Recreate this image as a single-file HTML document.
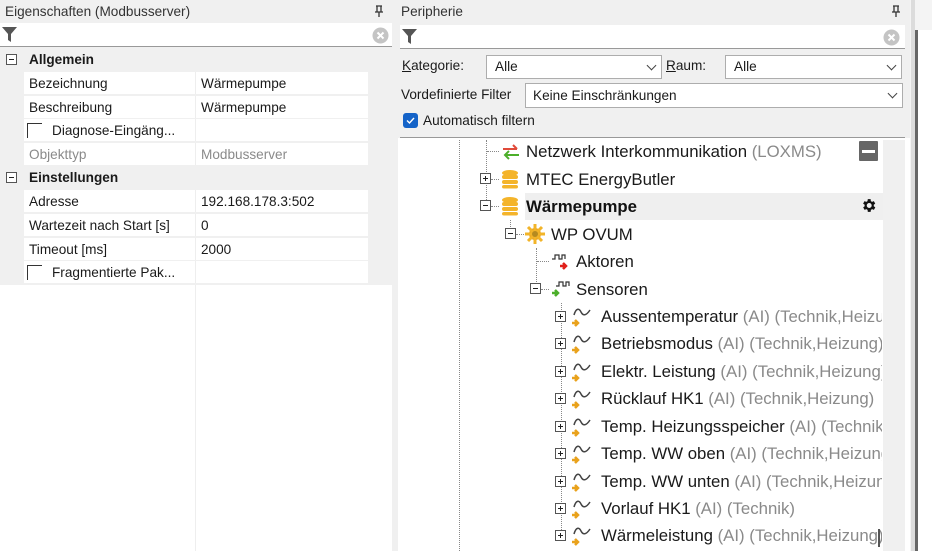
<!DOCTYPE html>
<html><head><meta charset="utf-8"><style>
*{margin:0;padding:0;box-sizing:border-box}
body{width:932px;height:551px;overflow:hidden;background:#fff;font-family:"Liberation Sans",sans-serif;position:relative;color:#1a1a1a}
.a{position:absolute;white-space:nowrap}
.t14{font-size:13.6px}
.t16{font-size:16.8px}
.g{color:#8a8a8a}
.box{position:absolute;width:11px;height:11px;border:1px solid #555;background:#fff}
.box:before{content:"";position:absolute;left:2px;top:4px;width:5px;height:1px;background:#222}
.plus:after{content:"";position:absolute;left:4px;top:2px;width:1px;height:5px;background:#222}
.vd{position:absolute;width:0;border-left:1px dotted #888}
.hd{position:absolute;height:0;border-top:1px dotted #888}
.row{position:absolute;left:24px;width:344px;height:22px;background:#fff}
.row .c{position:absolute;left:171px;top:0;width:1px;height:22px;background:#eee}
.cmb{position:absolute;background:#fff;border:1px solid #adadad;height:24px}
.chev{position:absolute;right:6px;top:6px;width:7px;height:7px;border-right:1.3px solid #444;border-bottom:1.3px solid #444;transform:rotate(45deg)}
.st{width:281px;overflow:hidden}
</style></head><body>
<!-- left panel -->
<div class="a" style="left:0;top:0;width:392px;height:285px;background:#f0f0f0"></div>
<div class="a t14" style="left:5px;top:4px;color:#333">Eigenschaften (Modbusserver)</div>
<svg class="a" style="left:374px;top:5px" width="10" height="12"><path d="M2 1H8M3 1V7M7 1V7M1 7H9M5 7V12" stroke="#333" stroke-width="1.3" fill="none"/></svg>
<div class="a" style="left:0;top:23px;width:392px;height:24px;background:#fff;border-bottom:1px solid #999"></div>
<svg class="a" style="left:1px;top:26px" width="17" height="17" viewBox="0 0 17 17"><path d="M1 1H16L10 8V16L7 14V8Z" fill="#555"/></svg>
<svg class="a" style="left:372px;top:27px" width="17" height="17" viewBox="0 0 17 17"><circle cx="8.5" cy="8.5" r="8" fill="#c4c4c4"/><path d="M5.5 5.5L11.5 11.5M11.5 5.5L5.5 11.5" stroke="#fff" stroke-width="2"/></svg>
<div class="box" style="left:6px;top:54px"></div>
<div class="a t14" style="left:29px;top:52px;font-weight:bold">Allgemein</div>
<div class="row" style="top:72px"><div class="c"></div><div class="a t14" style="left:5px;top:4px">Bezeichnung</div><div class="a t14" style="left:177px;top:4px">Wärmepumpe</div></div>
<div class="row" style="top:96px"><div class="c"></div><div class="a t14" style="left:5px;top:4px">Beschreibung</div><div class="a t14" style="left:177px;top:4px">Wärmepumpe</div></div>
<div class="row" style="top:119px"><div class="c"></div><div class="a" style="left:3px;top:4px;width:15px;height:15px;border-left:1px solid #333;border-top:1px solid #333"></div><div class="a t14" style="left:28px;top:4px">Diagnose-Eingäng...</div></div>
<div class="row" style="top:143px"><div class="c"></div><div class="a t14 g" style="left:5px;top:4px">Objekttyp</div><div class="a t14 g" style="left:177px;top:4px">Modbusserver</div></div>
<div class="box" style="left:6px;top:172px"></div>
<div class="a t14" style="left:29px;top:170px;font-weight:bold">Einstellungen</div>
<div class="row" style="top:190px"><div class="c"></div><div class="a t14" style="left:5px;top:4px">Adresse</div><div class="a t14" style="left:177px;top:4px">192.168.178.3:502</div></div>
<div class="row" style="top:214px"><div class="c"></div><div class="a t14" style="left:5px;top:4px">Wartezeit nach Start [s]</div><div class="a t14" style="left:177px;top:4px">0</div></div>
<div class="row" style="top:238px"><div class="c"></div><div class="a t14" style="left:5px;top:4px">Timeout [ms]</div><div class="a t14" style="left:177px;top:4px">2000</div></div>
<div class="row" style="top:261px"><div class="c"></div><div class="a" style="left:3px;top:4px;width:15px;height:15px;border-left:1px solid #333;border-top:1px solid #333"></div><div class="a t14" style="left:28px;top:4px">Fragmentierte Pak...</div></div>
<div class="a" style="left:195px;top:285px;width:1px;height:266px;background:#eee"></div>
<div class="a" style="left:392px;top:0;width:6px;height:551px;background:#f0f0f0"></div>

<!-- right panel -->
<div class="a" style="left:398px;top:0;width:512px;height:140px;background:#f0f0f0"></div>
<div class="a t14" style="left:401px;top:4px;color:#333">Peripherie</div>
<svg class="a" style="left:891px;top:5px" width="10" height="12"><path d="M2 1H8M3 1V7M7 1V7M1 7H9M5 7V12" stroke="#333" stroke-width="1.3" fill="none"/></svg>
<div class="a" style="left:400px;top:25px;width:505px;height:24px;background:#fff;border-bottom:1px solid #999"></div>
<svg class="a" style="left:401px;top:28px" width="17" height="17" viewBox="0 0 17 17"><path d="M1 1H16L10 8V16L7 14V8Z" fill="#555"/></svg>
<svg class="a" style="left:883px;top:29px" width="17" height="17" viewBox="0 0 17 17"><circle cx="8.5" cy="8.5" r="8" fill="#c4c4c4"/><path d="M5.5 5.5L11.5 11.5M11.5 5.5L5.5 11.5" stroke="#fff" stroke-width="2"/></svg>
<div class="a t14" style="left:402px;top:58px"><u>K</u>ategorie:</div>
<div class="cmb" style="left:486px;top:55px;width:176px"><div class="a t14" style="left:8px;top:3px">Alle</div><div class="chev"></div></div>
<div class="a t14" style="left:666px;top:58px"><u>R</u>aum:</div>
<div class="cmb" style="left:725px;top:55px;width:177px"><div class="a t14" style="left:8px;top:3px">Alle</div><div class="chev"></div></div>
<div class="a t14" style="left:401px;top:87px">Vordefinierte Filter</div>
<div class="cmb" style="left:525px;top:83px;width:378px;height:25px"><div class="a t14" style="left:7px;top:4px">Keine Einschränkungen</div><div class="chev"></div></div>
<div class="a" style="left:403px;top:113px;width:15px;height:15px;background:#1463c8;border-radius:3px"></div>
<svg class="a" style="left:403px;top:113px" width="15" height="15"><path d="M4 7.5L6.5 10L11 5" stroke="#fff" fill="none" stroke-width="1.4"/></svg>
<div class="a t14" style="left:423px;top:113px">Automatisch filtern</div>
<div class="a" style="left:400px;top:137px;width:505px;height:1px;background:#999"></div>
<div class="a" style="left:398px;top:138px;width:512px;height:413px;background:#fff"></div>
<div class="a" style="left:883px;top:140px;width:22px;height:411px;background:#f0f0f0"></div>
<div class="a" style="left:910px;top:0;width:22px;height:551px;background:#f4f4f4"></div>
<div class="a" style="left:911px;top:0;width:4px;height:551px;background:#dcdcdc"></div>
<div class="a" style="left:915px;top:30px;width:3px;height:521px;background:#666"></div>
<div class="a" style="left:918px;top:30px;width:14px;height:521px;background:#fff"></div>

<!-- tree -->
<div class="vd" style="left:459px;top:140px;height:411px"></div>
<div class="vd" style="left:486px;top:140px;height:66px"></div>
<div class="hd" style="left:487px;top:151px;width:12px"></div>
<div class="hd" style="left:491px;top:179px;width:8px"></div>
<div class="hd" style="left:491px;top:206px;width:8px"></div>
<svg class="a" style="left:501px;top:142px" width="20" height="20"><path d="M2 7H16M12 3L16 7" stroke="#e04a3a" stroke-width="2" fill="none"/><path d="M18 13H4M8 9L4 13L8 17" stroke="#4caf2a" stroke-width="2" fill="none"/></svg>
<div class="a t16" style="left:526px;top:142px">Netzwerk Interkommunikation <span class="g">(LOXMS)</span></div>
<div class="a" style="left:859px;top:141px;width:19px;height:20px;background:#666;border-radius:1px"></div>
<div class="a" style="left:862px;top:150px;width:13px;height:3px;background:#fff"></div>
<div class="box plus" style="left:480px;top:173px"></div>
<svg class="a" style="left:501px;top:169px" width="18" height="20"><ellipse cx="9" cy="4" rx="8" ry="3" fill="#f4b42a"/><rect x="1" y="6" width="16" height="4" rx="2" fill="#f4b42a"/><rect x="1" y="11" width="16" height="4" rx="2" fill="#f4b42a"/><rect x="1" y="16" width="16" height="3.5" rx="2" fill="#f4b42a"/></svg>
<div class="a t16" style="left:526px;top:170px">MTEC EnergyButler</div>
<div class="a" style="left:525px;top:193px;width:358px;height:27px;background:#efefef"></div>
<div class="box" style="left:480px;top:200px"></div>
<svg class="a" style="left:501px;top:196px" width="18" height="20"><ellipse cx="9" cy="4" rx="8" ry="3" fill="#f4b42a"/><rect x="1" y="6" width="16" height="4" rx="2" fill="#f4b42a"/><rect x="1" y="11" width="16" height="4" rx="2" fill="#f4b42a"/><rect x="1" y="16" width="16" height="3.5" rx="2" fill="#f4b42a"/></svg>
<div class="a t16" style="left:526px;top:197px;font-weight:bold;color:#111">Wärmepumpe</div>
<svg class="a" style="left:860px;top:197px" width="17" height="17" viewBox="0 0 24 24"><path fill="#111" d="M19.4 13a7.5 7.5 0 000-2l2.1-1.6-2-3.5-2.5 1a7.6 7.6 0 00-1.7-1L15 3h-4l-.4 2.8a7.6 7.6 0 00-1.7 1l-2.5-1-2 3.5L6.6 11a7.5 7.5 0 000 2l-2.1 1.6 2 3.5 2.5-1a7.6 7.6 0 001.7 1L11 21h4l.4-2.8a7.6 7.6 0 001.7-1l2.5 1 2-3.5zM13 15.5a3.5 3.5 0 110-7 3.5 3.5 0 010 7z"/></svg>
<div class="vd" style="left:510px;top:220px;height:9px"></div>
<div class="box" style="left:505px;top:228px"></div>
<div class="hd" style="left:516px;top:234px;width:8px"></div>
<svg class="a" style="left:524px;top:223px" width="22" height="22"><circle cx="11" cy="11" r="6" fill="#e9a21c"/><g stroke="#f2b429" stroke-width="3"><path d="M11 1V21M1 11H21M4 4L18 18M18 4L4 18"/></g><circle cx="11" cy="11" r="3" fill="#b58a20"/></svg>
<div class="a t16" style="left:551px;top:225px">WP OVUM</div>
<div class="vd" style="left:536px;top:248px;height:38px"></div>
<div class="hd" style="left:537px;top:261px;width:12px"></div>
<svg class="a" style="left:550px;top:252px" width="20" height="20"><path d="M2 7H5V3H9V7H12V3H15V7" stroke="#333" fill="none" stroke-width="1.2"/><path d="M10 14H16M13 11L16 14L13 17" stroke="#e0201a" stroke-width="2.5" fill="none"/></svg>
<div class="a t16" style="left:576px;top:252px">Aktoren</div>
<div class="box" style="left:530px;top:283px"></div>
<div class="hd" style="left:541px;top:289px;width:8px"></div>
<svg class="a" style="left:550px;top:279px" width="20" height="20"><path d="M6 7H9V3H13V7H16V3H19V7" stroke="#333" fill="none" stroke-width="1.2"/><path d="M2 14H8M5 11L8 14L5 17" stroke="#4caf2a" stroke-width="2.5" fill="none"/></svg>
<div class="a t16" style="left:576px;top:280px">Sensoren</div>
<div class="vd" style="left:561px;top:303px;height:233px"></div>

<div class="box plus" style="left:555px;top:311px"></div><svg class="a" style="left:570px;top:306px" width="24" height="22"><path d="M4 9C6 2 9 2 11 6S16 10 20 4" stroke="#444" fill="none" stroke-width="1.5"/><path d="M2 17H8M5 14L8 17L5 20" stroke="#e9a21c" stroke-width="2.5" fill="none"/></svg><div class="a t16 st" style="left:601px;top:307px">Aussentemperatur <span class="g">(AI) (Technik,Heizung)</span></div>
<div class="box plus" style="left:555px;top:338px"></div><svg class="a" style="left:570px;top:333px" width="24" height="22"><path d="M4 9C6 2 9 2 11 6S16 10 20 4" stroke="#444" fill="none" stroke-width="1.5"/><path d="M2 17H8M5 14L8 17L5 20" stroke="#e9a21c" stroke-width="2.5" fill="none"/></svg><div class="a t16 st" style="left:601px;top:334px">Betriebsmodus <span class="g">(AI) (Technik,Heizung)</span></div>
<div class="box plus" style="left:555px;top:366px"></div><svg class="a" style="left:570px;top:361px" width="24" height="22"><path d="M4 9C6 2 9 2 11 6S16 10 20 4" stroke="#444" fill="none" stroke-width="1.5"/><path d="M2 17H8M5 14L8 17L5 20" stroke="#e9a21c" stroke-width="2.5" fill="none"/></svg><div class="a t16 st" style="left:601px;top:362px">Elektr. Leistung <span class="g">(AI) (Technik,Heizung)</span></div>
<div class="box plus" style="left:555px;top:393px"></div><svg class="a" style="left:570px;top:388px" width="24" height="22"><path d="M4 9C6 2 9 2 11 6S16 10 20 4" stroke="#444" fill="none" stroke-width="1.5"/><path d="M2 17H8M5 14L8 17L5 20" stroke="#e9a21c" stroke-width="2.5" fill="none"/></svg><div class="a t16 st" style="left:601px;top:389px">Rücklauf HK1 <span class="g">(AI) (Technik,Heizung)</span></div>
<div class="box plus" style="left:555px;top:421px"></div><svg class="a" style="left:570px;top:416px" width="24" height="22"><path d="M4 9C6 2 9 2 11 6S16 10 20 4" stroke="#444" fill="none" stroke-width="1.5"/><path d="M2 17H8M5 14L8 17L5 20" stroke="#e9a21c" stroke-width="2.5" fill="none"/></svg><div class="a t16 st" style="left:601px;top:417px">Temp. Heizungsspeicher <span class="g">(AI) (Technik,Heizung)</span></div>
<div class="box plus" style="left:555px;top:448px"></div><svg class="a" style="left:570px;top:443px" width="24" height="22"><path d="M4 9C6 2 9 2 11 6S16 10 20 4" stroke="#444" fill="none" stroke-width="1.5"/><path d="M2 17H8M5 14L8 17L5 20" stroke="#e9a21c" stroke-width="2.5" fill="none"/></svg><div class="a t16 st" style="left:601px;top:444px">Temp. WW oben <span class="g">(AI) (Technik,Heizung)</span></div>
<div class="box plus" style="left:555px;top:476px"></div><svg class="a" style="left:570px;top:471px" width="24" height="22"><path d="M4 9C6 2 9 2 11 6S16 10 20 4" stroke="#444" fill="none" stroke-width="1.5"/><path d="M2 17H8M5 14L8 17L5 20" stroke="#e9a21c" stroke-width="2.5" fill="none"/></svg><div class="a t16 st" style="left:601px;top:472px">Temp. WW unten <span class="g">(AI) (Technik,Heizung)</span></div>
<div class="box plus" style="left:555px;top:503px"></div><svg class="a" style="left:570px;top:498px" width="24" height="22"><path d="M4 9C6 2 9 2 11 6S16 10 20 4" stroke="#444" fill="none" stroke-width="1.5"/><path d="M2 17H8M5 14L8 17L5 20" stroke="#e9a21c" stroke-width="2.5" fill="none"/></svg><div class="a t16 st" style="left:601px;top:499px">Vorlauf HK1 <span class="g">(AI) (Technik)</span></div>
<div class="box plus" style="left:555px;top:530px"></div><svg class="a" style="left:570px;top:525px" width="24" height="22"><path d="M4 9C6 2 9 2 11 6S16 10 20 4" stroke="#444" fill="none" stroke-width="1.5"/><path d="M2 17H8M5 14L8 17L5 20" stroke="#e9a21c" stroke-width="2.5" fill="none"/></svg><div class="a t16 st" style="left:601px;top:526px">Wärmeleistung <span class="g">(AI) (Technik,Heizung)</span></div>
<div class="a" style="left:878px;top:529px;width:2px;height:18px;background:#555"></div>
</body></html>
